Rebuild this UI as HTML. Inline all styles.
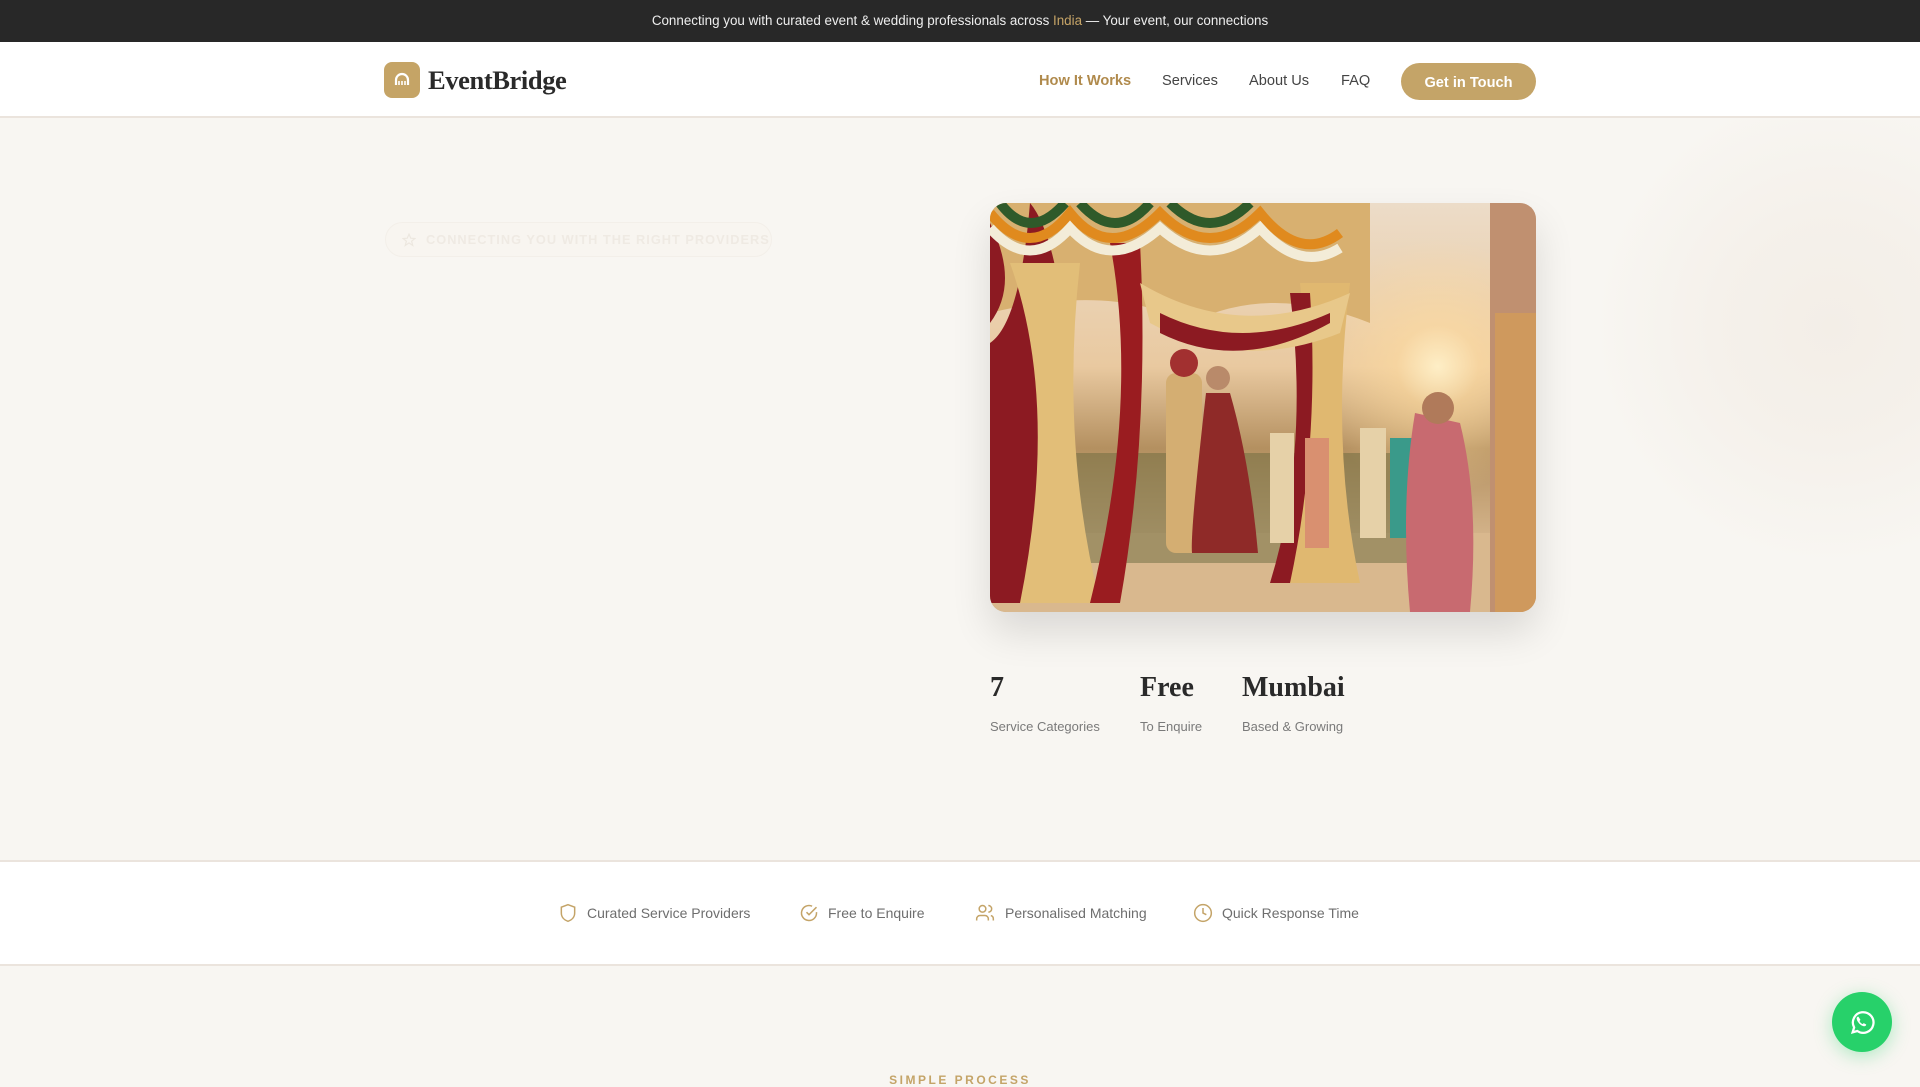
<!DOCTYPE html>
<html><head><meta charset="utf-8"><style>
*{margin:0;padding:0;box-sizing:border-box}
body{width:1920px;height:1080px;overflow:hidden;background:#f8f6f2;font-family:"Liberation Sans",sans-serif;position:relative}
.top{height:42px;background:#282828;color:#eee;font-size:13.4px;text-align:center;line-height:42px}
.top b{color:#c6a467;font-weight:normal}
nav{height:76px;background:#fff;border-bottom:2px solid #ebe4dd;position:relative}
.logo{position:absolute;left:384px;top:20px;display:flex;align-items:center}
.logo .ic{width:36px;height:36px;border-radius:8px;background:#c5a466;display:flex;align-items:center;justify-content:center}
.logo span{font-family:"Liberation Serif",serif;font-weight:bold;font-size:26.5px;color:#2a2a2a;margin-left:8px;letter-spacing:-0.4px}
.nl{position:absolute;top:31px;font-size:14.6px;color:#444}
.btn{position:absolute;left:1401px;top:21px;width:135px;height:37px;border-radius:19px;background:#c4a468;color:#fff;font-weight:bold;font-size:14.6px;text-align:center;line-height:37px;padding-top:2px}
.blob{position:absolute;left:1600px;top:120px;width:420px;height:460px;background:radial-gradient(circle at 55% 45%,#f3eee7 0,#f5f1eb 35%,rgba(248,246,242,0) 70%)}
.badge{position:absolute;left:385px;top:222px;width:387px;height:35px;border-radius:18px;border:1px solid #f3efe9;background:#f8f5f0;color:#efeae3;font-weight:bold;font-size:12.8px;letter-spacing:1px;line-height:33px;padding-left:40px;white-space:nowrap}
.img{position:absolute;left:990px;top:203px;width:546px;height:409px;border-radius:16px;overflow:hidden;box-shadow:0 20px 40px rgba(0,0,0,.12);
background:
radial-gradient(circle at 82% 40%,rgba(255,240,200,.95) 0,rgba(255,220,160,.6) 8%,rgba(0,0,0,0) 25%),
linear-gradient(180deg,#ecdcc8 0,#e9c9a0 40%,#b49060 60%,#d8b890 85%,#c8a070 100%)}
.num{position:absolute;top:672px;font-family:"Liberation Serif",serif;font-weight:bold;font-size:28px;color:#2a2a2a}
.lab{position:absolute;top:719px;font-size:13px;color:#7a7a7a}
.trust{position:absolute;left:0;top:860px;width:1920px;height:106px;background:#fff;border-top:2px solid #ebe4dd;border-bottom:2px solid #ebe4dd}
.ti{position:absolute;top:41px;font-size:14px;color:#6e6e6e;display:flex;align-items:center}
.ti svg{margin-right:9px}
.sp{position:absolute;top:1073px;left:0;width:1920px;text-align:center;font-size:12px;letter-spacing:2.5px;color:#c4a468;font-weight:bold}
.wa{position:absolute;left:1832px;top:992px;width:60px;height:60px;border-radius:50%;background:#27d16a;box-shadow:0 4px 18px rgba(39,209,106,.35);display:flex;align-items:center;justify-content:center}
</style></head><body>
<div class="top">Connecting you with curated event &amp; wedding professionals across <b>India</b> — Your event, our connections</div>
<nav>
<div class="logo"><div class="ic"><svg width="18" height="18" viewBox="0 0 18 18"><path d="M3 14V9a6 6 0 0 1 12 0v5" fill="none" stroke="#fff" stroke-width="2.2"/><path d="M6 14v-4M9 14v-4M12 14v-4" stroke="#fff" stroke-width="1.6"/></svg></div><span>EventBridge</span></div>
<div class="nl" style="left:1039px;color:#b08a4c;font-weight:bold">How It Works</div>
<div class="nl" style="left:1162px">Services</div>
<div class="nl" style="left:1249px">About Us</div>
<div class="nl" style="left:1341px">FAQ</div>
<div class="btn">Get in Touch</div>
</nav>
<div class="blob"></div>
<div class="badge"><svg style="position:absolute;left:16px;top:10px" width="14" height="14" viewBox="0 0 24 24" fill="none" stroke="#ece7df" stroke-width="2"><path d="M12 2l3 7 7 .5-5.5 4.5 2 7.5L12 17l-6.5 4.5 2-7.5L2 9.5 9 9z"/></svg>CONNECTING YOU WITH THE RIGHT PROVIDERS</div>
<div class="img">
<svg width="546" height="409" viewBox="0 0 546 409" style="position:absolute;left:0;top:0">
<rect x="0" y="330" width="546" height="79" fill="#d9b88e"/>
<rect x="80" y="250" width="340" height="110" fill="#6b6a3e" opacity=".5"/>
<path d="M0 0H380V120Q280 80 200 120Q120 80 0 110Z" fill="#d8b070"/>
<path d="M0 20Q30 80 0 120Z M40 0Q90 60 80 400H0V140Q30 120 40 0Z" fill="#8c1a22"/>
<path d="M20 60Q70 200 30 400H110Q70 240 90 60Z" fill="#e2be78"/>
<path d="M120 40Q150 200 100 400H130Q160 230 150 40Z" fill="#9a1c20"/>
<path d="M310 80Q330 260 290 380H370Q340 240 360 80Z" fill="#e0b870"/>
<path d="M300 90Q320 250 280 380H300Q330 240 320 90Z" fill="#8c1a22"/>
<path d="M150 80Q250 140 360 90L350 130Q250 170 160 120Z" fill="#e8c88a"/>
<path d="M170 110Q250 150 340 110L340 120Q250 170 170 130Z" fill="#8c1a22"/>
<g fill="none" stroke-width="10"><path d="M0 10Q40 60 80 10Q120 60 170 10Q220 60 270 10Q310 60 350 30" stroke="#e08a1e"/><path d="M0 25Q40 70 80 25Q120 70 170 25Q220 70 270 25Q310 70 350 45" stroke="#f3ecd8"/><path d="M10 0Q40 40 75 0M90 0Q125 40 160 0M180 0Q220 40 260 0" stroke="#2f5a2a"/></g>
<rect x="176" y="170" width="36" height="180" rx="10" fill="#d4ae72"/><circle cx="194" cy="160" r="14" fill="#a23030"/>
<path d="M216 190Q200 330 202 350H268Q260 260 240 190Z" fill="#8f2a28"/><circle cx="228" cy="175" r="12" fill="#b98a6a"/>
<rect x="280" y="230" width="24" height="110" fill="#e6d1a8"/><rect x="315" y="235" width="24" height="110" fill="#d99070"/>
<rect x="370" y="225" width="26" height="110" fill="#e6d1a8"/><rect x="400" y="235" width="22" height="100" fill="#3a9a8a"/>
<path d="M425 210Q410 300 420 409H480Q490 300 470 220Z" fill="#c86a70"/><circle cx="448" cy="205" r="16" fill="#b07a5a"/>
<rect x="500" y="0" width="46" height="409" fill="#c09070"/><rect x="505" y="110" width="41" height="300" fill="#d8a050" opacity=".6"/>
</svg>
</div>
<div class="num" style="left:990px">7</div><div class="lab" style="left:990px">Service Categories</div>
<div class="num" style="left:1140px">Free</div><div class="lab" style="left:1140px">To Enquire</div>
<div class="num" style="left:1242px">Mumbai</div><div class="lab" style="left:1242px">Based &amp; Growing</div>
<div class="trust">
<div class="ti" style="left:558px"><svg width="20" height="20" viewBox="0 0 24 24" fill="none" stroke="#c4a468" stroke-width="1.8"><path d="M12 2l8 3v7c0 5-3.5 8.5-8 10-4.5-1.5-8-5-8-10V5z"/></svg>Curated Service Providers</div>
<div class="ti" style="left:799px"><svg width="20" height="20" viewBox="0 0 24 24" fill="none" stroke="#c4a468" stroke-width="1.8"><path d="M21 11v1a9 9 0 1 1-5.3-8.2"/><path d="M9 11l3 3 9-9"/></svg>Free to Enquire</div>
<div class="ti" style="left:974px"><svg width="22" height="20" viewBox="0 0 24 24" fill="none" stroke="#c4a468" stroke-width="1.8"><circle cx="9" cy="7" r="4"/><path d="M2 21v-2a4 4 0 0 1 4-4h6a4 4 0 0 1 4 4v2M16 3a4 4 0 0 1 0 8M22 21v-2a4 4 0 0 0-3-3.9"/></svg>Personalised Matching</div>
<div class="ti" style="left:1193px"><svg width="20" height="20" viewBox="0 0 24 24" fill="none" stroke="#c4a468" stroke-width="1.8"><circle cx="12" cy="12" r="10"/><path d="M12 6v6l4 2"/></svg>Quick Response Time</div>
</div>
<div class="sp">SIMPLE PROCESS</div>
<div class="wa"><svg width="30" height="30" viewBox="0 0 32 32" fill="none" stroke="#fff" stroke-width="2.4"><path d="M6 27l1.6-5.2A11 11 0 1 1 11 25.6Z"/><path d="M12 10.5c-.8 0-1.6 1-1.4 2.3.5 3 4 6.8 7.4 7.4 1.3.2 2.2-.6 2.2-1.4l-2.3-1.2-1.2 1c-1.6-.6-3.1-2.1-3.7-3.7l1-1.2z" fill="#fff" stroke-width="0.6"/></svg></div>
</body></html>
